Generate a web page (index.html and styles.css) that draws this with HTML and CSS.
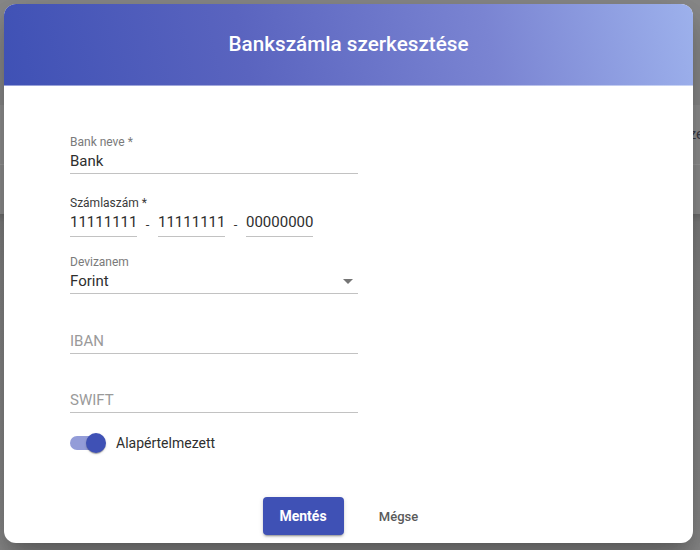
FILE: index.html
```html
<!DOCTYPE html>
<html lang="hu">
<head>
<meta charset="utf-8">
<title>Bankszámla szerkesztése</title>
<link rel="stylesheet" href="styles.css">
</head>
<body>
<div class="app">
  <div class="app-top"></div>
  <div class="app-band"><span class="app-text">ze</span></div>
  <div class="app-band2"></div>
  <div class="app-rest"></div>
</div>

<div class="dialog">
  <header class="dialog-header">
    <h1 class="dialog-title">Bankszámla szerkesztése</h1>
  </header>
  <div class="dialog-body">
    <div class="field f1">
      <div class="label">Bank neve *</div>
      <div class="input">Bank</div>
    </div>
    <div class="field f2">
      <div class="label dark">Számlaszám *</div>
      <div class="acc-row">
        <div class="input acc">11111111</div>
        <span class="dash">-</span>
        <div class="input acc">11111111</div>
        <span class="dash">-</span>
        <div class="input acc">00000000</div>
      </div>
    </div>
    <div class="field f3">
      <div class="label">Devizanem</div>
      <div class="input select">Forint<span class="arrow"></span></div>
    </div>
    <div class="field f4">
      <div class="label"></div>
      <div class="input placeholder">IBAN</div>
    </div>
    <div class="field f5">
      <div class="label"></div>
      <div class="input placeholder">SWIFT</div>
    </div>
    <div class="toggle-row">
      <span class="toggle"><span class="track"></span><span class="thumb"></span></span>
      <span class="toggle-label">Alapértelmezett</span>
    </div>
    <div class="actions">
      <button class="btn primary">Mentés</button>
      <button class="btn flat">Mégse</button>
    </div>
  </div>
</div>
</body>
</html>
```
FILE: styles.css
```css
* { box-sizing: border-box; }
html, body { margin: 0; padding: 0; }
body {
  width: 700px;
  height: 550px;
  overflow: hidden;
  background: #8a8a8a;
  font-family: Roboto, "Noto Sans", sans-serif;
  position: relative;
}
.app { display: flex; flex-direction: column; height: 550px; }
.app-top { height: 105px; background: #8a8a8a; }
.app-band {
  height: 60px;
  background: #919191;
  border-bottom: 1px solid #9c9c9c;
  display: flex;
  align-items: center;
  justify-content: flex-end;
  overflow: hidden;
}
.app-text { color: #3c3c48; font-size: 15px; margin-right: -4px; margin-top: -2px; }
.app-band2 { height: 49px; background: #8f8f8f; }
.app-rest { flex: 1; background: linear-gradient(#6e6e6e, #7e7e7e 8px, #848484 60px, #8a8a8a); }

.dialog {
  position: absolute;
  left: 4px;
  top: 4px;
  width: 689px;
  height: 539px;
  background: #fff;
  border-radius: 12px;
  overflow: hidden;
  box-shadow: 0 11px 15px -7px rgba(0,0,0,.2), 0 24px 38px 3px rgba(0,0,0,.14), 0 9px 46px 8px rgba(0,0,0,.12);
  display: flex;
  flex-direction: column;
}
.dialog-header {
  height: 82px;
  background: linear-gradient(78deg, #3f51b5 0%, #5a64bf 35%, #7a84d2 70%, #9db1ec 100%);
  border-bottom: 1px solid rgba(255,255,255,.45);
  display: flex;
  align-items: center;
  justify-content: center;
}
.dialog-title {
  margin: 0;
  margin-top: -2px;
  color: #fff;
  font-size: 20.7px;
  font-weight: 500;
  letter-spacing: 0;
}
.dialog-body {
  padding: 49px 0 0 66px;
  flex: 1;
  display: flex;
  flex-direction: column;
}
.field { width: 288px; display: flex; flex-direction: column; }
.f2 { margin-top: 22px; }
.f3 { margin-top: 18px; }
.f4 { margin-top: 21px; }
.f5 { margin-top: 20px; }
.label {
  height: 14px;
  line-height: 14px;
  font-size: 12px;
  color: #7a7a7a;
}
.label.dark { color: #3a3a3a; }
.input {
  height: 25px;
  line-height: 24px;
  font-size: 15px;
  color: #2e2e2e;
  border-bottom: 1px solid #c2c2c2;
}
.placeholder { color: #9a9a9a; }
.select { position: relative; }
.arrow {
  position: absolute;
  right: 5px;
  top: 10px;
  width: 0;
  height: 0;
  border-left: 5px solid transparent;
  border-right: 5px solid transparent;
  border-top: 5px solid #757575;
}
.acc-row { display: flex; align-items: flex-start; height: 27px; }
.acc { width: 67px; height: 27px; padding-bottom: 2px; }
.dash {
  width: 21px;
  height: 27px;
  text-align: center;
  font-size: 13px;
  line-height: 29px;
  color: #333;
}
.toggle-row {
  margin-top: 18px;
  height: 24px;
  display: flex;
  align-items: center;
}
.toggle { position: relative; width: 36px; height: 20px; }
.track {
  position: absolute;
  left: 0;
  top: 3px;
  width: 34px;
  height: 14px;
  border-radius: 7px;
  background: #939cd8;
}
.thumb {
  position: absolute;
  left: 16px;
  top: 0;
  width: 20px;
  height: 20px;
  border-radius: 50%;
  background: #3f51b5;
  box-shadow: 0 2px 1px -1px rgba(0,0,0,.2), 0 1px 1px 0 rgba(0,0,0,.14), 0 1px 3px 0 rgba(0,0,0,.12);
}
.toggle-label {
  margin-left: 10px;
  font-size: 14px;
  color: #2e2e2e;
}
.actions {
  margin-top: auto;
  margin-bottom: 8px;
  margin-left: -66px;
  display: flex;
  justify-content: center;
  gap: 19px;
}
.btn {
  font-family: Roboto, "Noto Sans", sans-serif;
  font-size: 14px;
  height: 38px;
  border: none;
  border-radius: 4px;
  cursor: pointer;
}
.primary {
  width: 81px;
  background: #3f51b5;
  color: #fff;
  font-weight: 700;
  box-shadow: 0 3px 1px -2px rgba(0,0,0,.2), 0 2px 2px 0 rgba(0,0,0,.14), 0 1px 5px 0 rgba(0,0,0,.12);
}
.flat {
  width: 72px;
  background: transparent;
  color: #5a5a5a;
  font-weight: 500;
  font-size: 13px;
}
```
